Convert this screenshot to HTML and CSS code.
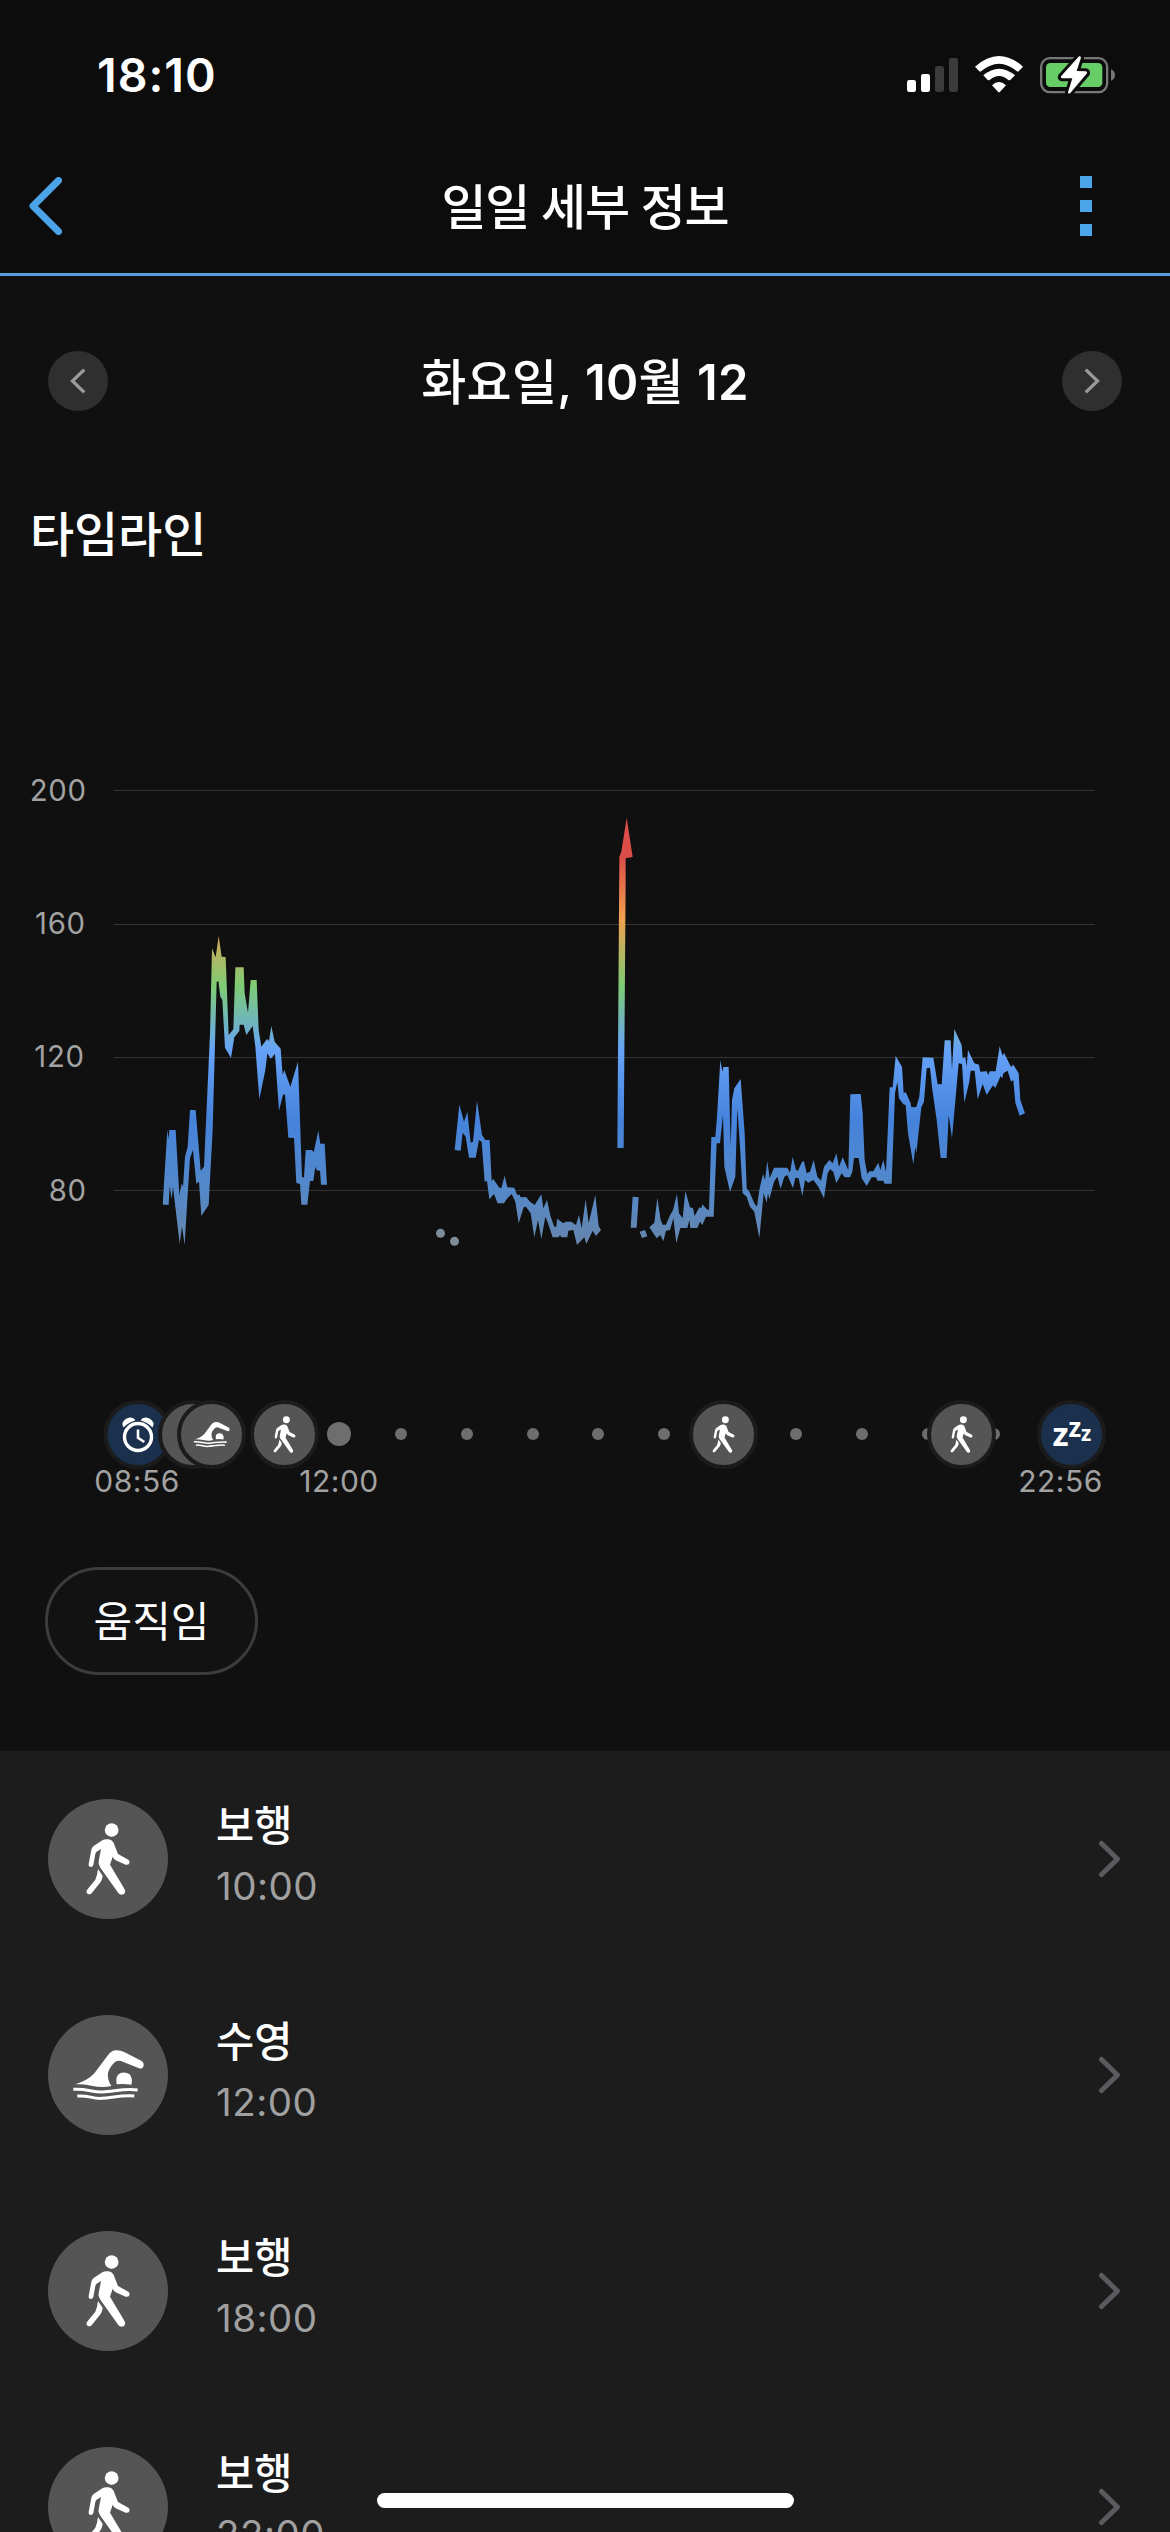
FILE: index.html
```html
<!DOCTYPE html>
<html lang="ko">
<head>
    <meta charset="UTF-8">
    <meta name="viewport" content="width=device-width, initial-scale=1.0">
    <title>일일 세부 정보</title>
    <link rel="stylesheet" href="styles.css">
</head>
<body>
    <!-- Shared icons -->
    <svg class="sprite" aria-hidden="true">
        <symbol id="walk" viewBox="0 0 360 360">
            <circle cx="191" cy="93" r="20.5"/>
            <path d="M122 195L130 153Q131 146 137 141L163 124Q170 120 179 121Q192 122 197 132L210 165L241 182Q247 187 244 193Q241 199 233 197L203 184Q198 181 194 173L186 197L230 271Q234 281 227 286Q217 290 211 282L157 206Q150 197 152 187L159 150L146 158Q143 160 142 165L136 198Q134 204 128 204Q121 203 122 195Z"/>
            <path d="M150 210L164 230Q163 242 158 249L132 281Q127 288 120 285Q113 281 117 273L142 242Q148 228 150 210Z"/>
        </symbol>
        <symbol id="swim" viewBox="0 0 360 360">
            <path d="M82 208Q120 196 139 175L178 123Q190 105 206 106Q218 106 230 112L281 138Q290 145 286 155Q282 163 273 160L219 138Q209 135 201 141Q185 155 180 174Q177 192 190 213Q165 220 130 212Q105 207 82 208Z"/>
            <path d="M206 208Q201 180 218 174Q232 169 245 178Q255 190 250 209Q228 206 206 208Z"/>
            <path class="wave" d="M76 223C120 221 130 232 164 231S225 220 269 225M88 243C122 240 132 252 162 250S220 240 259 243"/>
        </symbol>
        <symbol id="chevron" viewBox="0 0 24 38">
            <path d="M3.500 3.500L19.500 19L3.500 34.500"/>
        </symbol>
    </svg>

    <header class="top">
        <div class="status-bar">
            <span class="clock">18:10</span>
            <svg class="status-icons" viewBox="78 66 630 132">
                <g fill="#fff">
                    <rect x="81" y="147" width="27" height="36" rx="7"/>
                    <rect x="123" y="129" width="27" height="54" rx="7"/>
                </g>
                <g fill="#3b3b3b">
                    <rect x="165" y="105" width="27" height="78" rx="7"/>
                    <rect x="207" y="81" width="27" height="102" rx="7"/>
                </g>
                <path fill="#fff" d="M285 107Q357 43 429 107L416 121Q414 123 411 121Q357 75 303 121Q300 123 298 121ZM310 133Q357 93 405 133L391 147Q388 149 385 147Q357 123 329 147Q326 149 323 147ZM336 163Q357 143 378 163L360 182Q357 185 354 182Z"/>
                <rect x="483.500" y="81.500" width="198" height="102" rx="26" fill="none" stroke="#777" stroke-width="7"/>
                <path fill="#777" d="M693 115Q705 120 705 132T693 149Z"/>
                <rect x="498" y="96" width="169" height="72" rx="13" fill="#67ce67"/>
                <path class="bolt" d="M597 76L543 136Q541 141 546 142L577 142L564 184Q565 190 571 186L621 127Q622 121 617 121L590 120L603 80Q602 74 597 76Z"/>
            </svg>
        </div>
        <div class="nav-bar">
            <svg class="back" viewBox="0 0 33 58"><path d="M29.500 3.500L4 29L29.500 54.500"/></svg>
            <h1>일일 세부 정보</h1>
            <div class="more"><i></i><i></i><i></i></div>
        </div>
    </header>

    <main>
        <div class="date-picker">
            <button type="button" class="round prev"><svg><use href="#chevron"/></svg></button>
            <h2>화요일, <b>10</b>월 <b>12</b></h2>
            <button type="button" class="round"><svg><use href="#chevron"/></svg></button>
        </div>

        <h3>타임라인</h3>

        <!-- Heart rate chart -->
        <svg class="chart" viewBox="0 0 3510 1500">
            <defs>
                <linearGradient id="zones" gradientUnits="userSpaceOnUse" x1="0" y1="0" x2="0" y2="1500">
                    <stop offset=".193" stop-color="#dc4c48"/>
                    <stop offset=".317" stop-color="#f0a04e"/>
                    <stop offset=".453" stop-color="#7dcb75"/>
                    <stop offset=".58" stop-color="#66a3f8"/>
                    <stop offset=".72" stop-color="#4583dc"/>
                    <stop offset=".86" stop-color="#5488c8"/>
                    <stop offset=".96" stop-color="#6486ae"/>
                </linearGradient>
                <clipPath id="heart-rate">
                    <path transform="translate(300 420)" d="M188 914L202 690 206 718 208 690 227 690 238 886 245 850 249 860 255 770 263 740 270 630 287 630 302 812 312 800 330 400 336 145 347 172 356 108 365 170 377 171 386 405 400 388 406 202 431 202 434 280 444 338 452 240 470 240 476 390 484 440 501 417 507 423 514 378 524 425 542 446 548 525 553 510 571 560 594 485 606 832 612 832 617 750 636 750 641 757 655 692 661 731 674 731 681 854 663 854 660 812 650 811 646 800 640 843 630 843 622 914 604 914 600 852 589 849 582 714 565 713 555 583 549 585 537 632 525 462 512 476 502 460 496 510 478 598 466 440 458 378 439 405 431 374 419 374 418 393 403 412 393 474 375 443 367 300 361 290 355 243 350 246 338 690 326 915 304 948 297 845 289 851 279 750 270 775 262 900 254 1035 246 980 239 1032 219 860 215 897 209 858 206 914Z"/>
                    <path transform="translate(1200 60)" d="M164 1110L178 974 192 1025 202 996 212 1088 219 1085 231 962 246 1065 256 1080 269 1080 275 1203 280 1197 297 1222 304 1225 314 1187 322 1222 343 1223 351 1244 359 1244 362 1252 378 1251 390 1265 404 1275 424 1243 430 1285 441 1260 452 1310 463 1340 469 1340 471 1316 490 1330 497 1325 514 1325 528 1335 537 1305 545 1345 557 1258 566 1330 586 1245 596 1338 603 1350 588 1368 578 1352 559 1392 553 1372 531 1395 520 1350 505 1352 502 1372 484 1372 480 1365 476 1372 458 1372 444 1330 436 1310 424 1377 414 1320 403 1372 392 1300 378 1280 371 1282 356 1330 346 1265 335 1242 322 1255 312 1270 293 1270 282 1242 268 1258 261 1203 254 1205 245 1085 237 1080 227 1133 207 1133 197 1070 188 1058 182 1112ZM652 1104L658 230 664 215 680 113 698 231 677 235 677 300 671 1104ZM692 1343L698 1250 716 1252 710 1343ZM719 1355L735 1350 742 1369 726 1374Z"/>
                    <path transform="translate(1800 720)" d="M148 682L163 668 172 593 182 660 188 674 198 674 208 650 219 630 231 582 237 640 248 655 256 573 270 622 279 624 284 648 298 622 304 625 307 613 320 628 327 630 334 411 346 411 351 350 361 180 367 215 370 201 386 201 392 440 396 300 403 265 422 237 434 400 440 565 448 575 463 610 471 620 478 570 489 522 495 540 502 483 509 535 522 503 562 503 570 518 578 470 588 510 594 512 606 485 612 484 620 520 630 515 641 480 652 530 663 542 672 500 688 480 698 490 709 460 717 500 728 472 734 532 725 520 709 550 700 515 690 508 683 520 672 595 655 560 640 540 625 548 615 540 607 588 596 535 586 533 579 565 562 525 553 530 542 566 532 530 522 545 508 598 504 580 500 608 491 580 478 715 463 635 450 620 440 590 428 580 420 440 412 325 406 530 390 576 373 500 369 345 360 430 350 430 341 650 318 650 307 675 300 665 292 684 271 684 268 660 262 684 241 684 229 730 220 655 210 690 198 692 190 724 181 705 170 715Z"/>
                    <path transform="translate(2520 720)" d="M8 472L25 510 31 283 62 282 68 340 74 480 82 522 88 514 100 514 115 488 121 510 130 480 138 515 149 262 158 262 167 168 186 200 191 280 197 276 212 310 214 322 229 321 238 290 248 172 280 173 293 253 305 253 314 121 332 121 336 210 343 87 365 135 368 175 376 172 380 200 384 150 403 190 417 194 421 215 440 214 445 225 449 214 467 214 479 139 488 168 492 158 510 195 514 200 520 194 536 220 541 300 555 340 539 347 526 308 520 240 513 245 503 212 490 220 487 235 482 228 466 264 459 256 440 285 428 252 413 298 404 212 392 212 388 245 373 308 366 192 356 190 336 415 326 345 320 474 302 474 290 360 276 262 270 203 260 205 252 305 244 322 229 460 226 440 220 493 204 400 197 315 190 313 177 295 172 245 165 280 155 551 134 551 130 542 112 542 108 532 95 532 80 558 65 535 56 474 42 474 37 515 30 532 14 532 5 520Z"/>
                </clipPath>
            </defs>
            <g class="grid-lines">
                <path d="M342 91.500H3285M342 493.500H3285M342 892.500H3285M342 1291.500H3285"/>
            </g>
            <g class="grid-labels">
                <text x="260" y="123">200</text>
                <text x="257" y="522">160</text>
                <text x="254" y="921">120</text>
                <text x="260" y="1323">80</text>
            </g>
            <rect width="3510" height="1500" fill="url(#zones)" clip-path="url(#heart-rate)"/>
            <g fill="#7f8d98">
                <circle cx="1321.500" cy="1420" r="13.500"/>
                <circle cx="1363.500" cy="1444" r="13.500"/>
            </g>
        </svg>

        <!-- Activity timeline -->
        <svg class="timeline" viewBox="0 0 1170 120">
            <g fill="#6e6e6e">
                <circle cx="339" cy="44" r="12"/>
                <circle cx="401" cy="44" r="6"/>
                <circle cx="467" cy="44" r="6"/>
                <circle cx="533" cy="44" r="6"/>
                <circle cx="598" cy="44" r="6"/>
                <circle cx="664" cy="44" r="6"/>
                <circle cx="796" cy="44" r="6"/>
                <circle cx="862" cy="44" r="6"/>
                <circle cx="928" cy="44" r="6"/>
                <circle cx="994" cy="44" r="6"/>
            </g>
            <g class="marker sleep">
                <circle cx="138" cy="44.500" r="32.500"/>
                <g class="alarm" transform="translate(138 47)">
                    <circle r="13.500"/>
                    <path class="hands" d="M0 -7.500V.8L6.300 5"/>
                    <path class="bells" d="M-14.500 -9.500Q-17.500 -15 -11.500 -18.500Q-5 -21 -2.500 -16.500Q-9 -15 -14.500 -9.500ZM14.500 -9.500Q17.500 -15 11.500 -18.500Q5 -21 2.500 -16.500Q9 -15 14.500 -9.500Z"/>
                </g>
            </g>
            <g class="marker"><circle cx="192.500" cy="44.500" r="32.500"/></g>
            <g class="marker">
                <circle cx="211.500" cy="44.500" r="32.500"/>
                <use href="#swim" x="181" y="14" width="61" height="61"/>
            </g>
            <g class="marker">
                <circle cx="284.500" cy="44.500" r="32.500"/>
                <use href="#walk" x="254" y="14" width="61" height="61"/>
            </g>
            <g class="marker">
                <circle cx="723.500" cy="44.500" r="32.500"/>
                <use href="#walk" x="693" y="14" width="61" height="61"/>
            </g>
            <g class="marker">
                <circle cx="961.500" cy="44.500" r="32.500"/>
                <use href="#walk" x="931" y="14" width="61" height="61"/>
            </g>
            <g class="marker sleep">
                <circle cx="1071.500" cy="44.500" r="32.500"/>
                <text class="zzz" y="56"><tspan x="1052.500" font-size="33">z</tspan><tspan x="1068.500" y="46.500" font-size="26">z</tspan><tspan x="1081" y="51" font-size="21">z</tspan></text>
            </g>
            <g class="times">
                <text x="137" y="102">08:56</text>
                <text x="339" y="102">12:00</text>
                <text x="1060.500" y="102">22:56</text>
            </g>
        </svg>

        <button type="button" class="chip">움직임</button>

        <ul class="activities">
            <li>
                <svg class="avatar"><use href="#walk"/></svg>
                <div class="info"><strong>보행</strong><span>10:00</span></div>
                <svg class="go"><use href="#chevron"/></svg>
            </li>
            <li>
                <svg class="avatar"><use href="#swim"/></svg>
                <div class="info"><strong>수영</strong><span>12:00</span></div>
                <svg class="go"><use href="#chevron"/></svg>
            </li>
            <li>
                <svg class="avatar"><use href="#walk"/></svg>
                <div class="info"><strong>보행</strong><span>18:00</span></div>
                <svg class="go"><use href="#chevron"/></svg>
            </li>
            <li>
                <svg class="avatar"><use href="#walk"/></svg>
                <div class="info"><strong>보행</strong><span>22:00</span></div>
                <svg class="go"><use href="#chevron"/></svg>
            </li>
        </ul>
    </main>

    <div class="home-indicator"></div>
</body>
</html>
```
FILE: styles.css
```css
* {
    box-sizing: border-box;
}

body {
    font-family: Inter, 'Noto Sans CJK KR', sans-serif;
    margin: 0;
    width: 1170px;
    height: 2532px;
    overflow: hidden;
    background: #101010;
    color: #fff;
}

h1, h2, h3 {
    margin: 0;
    font-weight: 500;
    white-space: nowrap;
}

button {
    font-family: inherit;
    padding: 0;
    color: #fff;
}

.sprite {
    display: none;
}

.wave {
    fill: none;
    stroke: currentColor;
    stroke-width: 9;
}

/* Header */
.top {
    height: 276px;
    background: #0c0c0c;
    border-bottom: 3px solid #55a0dc;
}

.status-bar {
    display: flex;
    justify-content: space-between;
    align-items: center;
    height: 150px;
    padding: 0 54px 0 97px;
}

.clock {
    font-size: 46.5px;
    font-weight: 600;
    letter-spacing: 1px;
}

.status-icons {
    width: 210px;
    height: 44px;
}

.bolt {
    fill: #fff;
    stroke: #0c0c0c;
    stroke-width: 18;
    paint-order: stroke;
}

.nav-bar {
    display: grid;
    grid-template-columns: 1fr auto 1fr;
    align-items: center;
    height: 112px;
    padding: 0 29px;
}

.nav-bar h1 {
    padding-top: 3px;
    font-size: 49px;
    line-height: 60px;
    letter-spacing: -1.2px;
}

.back {
    width: 33px;
    height: 58px;
    fill: none;
    stroke: #4ba4e8;
    stroke-width: 7;
    stroke-linecap: round;
    stroke-linejoin: round;
}

.more {
    display: grid;
    gap: 12px;
    justify-self: end;
    margin-right: 49px;
}

.more i {
    width: 12px;
    height: 12px;
    background: #4ba4e8;
}

/* Date picker */
.date-picker {
    display: flex;
    justify-content: space-between;
    align-items: center;
    height: 210px;
    padding: 0 48px;
}

.date-picker h2 {
    padding-top: 3px;
    font-size: 49px;
    line-height: 60px;
    letter-spacing: 0.2px;
}

.date-picker b {
    font-weight: 600;
}

.round {
    display: flex;
    justify-content: center;
    align-items: center;
    width: 60px;
    height: 60px;
    border: none;
    border-radius: 50%;
    background: #2f2f2f;
}

.round svg {
    width: 18px;
    height: 28px;
    fill: none;
    stroke: #9a9a9a;
    stroke-width: 4.5;
}

.prev {
    transform: scaleX(-1);
}

h3 {
    padding: 19px 0 0 30px;
    height: 274px;
    font-size: 48px;
    line-height: 60px;
    letter-spacing: -0.1px;
}

/* Chart */
.chart {
    display: block;
    width: 1170px;
    height: 500px;
}

.grid-lines {
    stroke: #333;
    stroke-width: 3;
}

.grid-labels {
    fill: #a2a2a2;
    font-size: 88px;
    letter-spacing: 2px;
    text-anchor: end;
}

/* Timeline */
.timeline {
    display: block;
    margin-top: 130px;
    width: 1170px;
    height: 120px;
}

.marker {
    color: #fff;
    fill: #fff;
}

.marker > circle {
    fill: #555;
    stroke: #1b1b1b;
    stroke-width: 4;
}

.marker.sleep > circle {
    fill: #1a304c;
}

.alarm circle,
.alarm .hands {
    fill: none;
    stroke: #fff;
    stroke-width: 3.4;
}

.alarm .hands {
    stroke-width: 2.6;
}

.zzz {
    font-family: 'Open Sans', sans-serif;
    font-weight: 700;
}

.times {
    fill: #a2a2a2;
    font-size: 30px;
    letter-spacing: 0.5px;
    text-anchor: middle;
}

.chip {
    display: block;
    margin: 57px 0 76px 45px;
    padding-bottom: 6px;
    width: 213px;
    height: 108px;
    border: 3px solid #3c3c3c;
    border-radius: 55px;
    background: #121212;
    font-size: 42px;
}

/* Activity list */
.activities {
    list-style: none;
    margin: 0;
    padding: 0;
    background: #1c1c1c;
}

.activities li {
    display: flex;
    align-items: center;
    height: 216px;
    padding: 0 48px;
}

.avatar {
    width: 120px;
    height: 120px;
    border-radius: 50%;
    background: #555;
    fill: #fff;
}

.info {
    flex: 1;
    display: flex;
    flex-direction: column;
    padding: 0 0 7px 48px;
}

.info strong {
    font-size: 41.5px;
    font-weight: 500;
    line-height: 60px;
}

.info span {
    color: #a0a0a0;
    font-size: 38.5px;
    line-height: 60px;
    letter-spacing: 0.5px;
}

.go {
    width: 24px;
    height: 38px;
    fill: none;
    stroke: #5b5b5f;
    stroke-width: 5;
    stroke-linecap: round;
    stroke-linejoin: round;
}

.home-indicator {
    position: fixed;
    left: 377px;
    bottom: 24px;
    width: 417px;
    height: 15px;
    border-radius: 8px;
    background: #fff;
}
```
